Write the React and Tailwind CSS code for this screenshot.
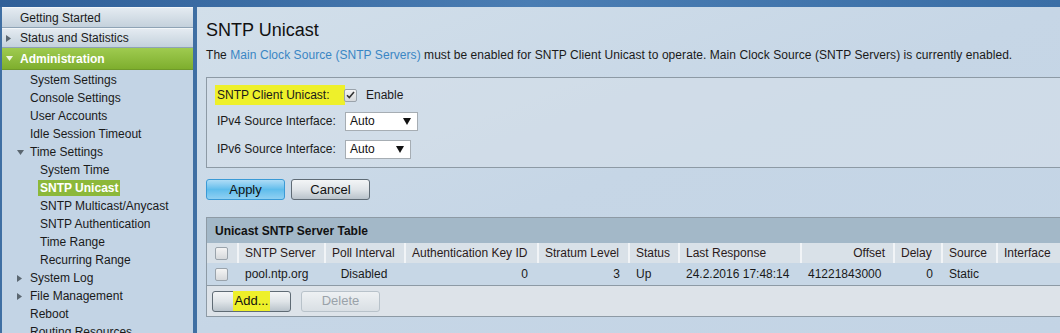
import React from "react";

const sideItems = [
  { label: "System Settings", level: 2 },
  { label: "Console Settings", level: 2 },
  { label: "User Accounts", level: 2 },
  { label: "Idle Session Timeout", level: 2 },
  { label: "Time Settings", level: 2, arrow: "down" },
  { label: "System Time", level: 3 },
  { label: "SNTP Unicast", level: 3, active: true },
  { label: "SNTP Multicast/Anycast", level: 3 },
  { label: "SNTP Authentication", level: 3 },
  { label: "Time Range", level: 3 },
  { label: "Recurring Range", level: 3 },
  { label: "System Log", level: 2, arrow: "right" },
  { label: "File Management", level: 2, arrow: "right" },
  { label: "Reboot", level: 2 },
  { label: "Routing Resources", level: 2 },
];

const headers = [
  { label: "SNTP Server" },
  { label: "Poll Interval" },
  { label: "Authentication Key ID" },
  { label: "Stratum Level" },
  { label: "Status" },
  { label: "Last Response" },
  { label: "Offset", right: true },
  { label: "Delay" },
  { label: "Source" },
  { label: "Interface" },
];

const gridCols =
  "grid grid-cols-[30px_87px_80px_133px_91px_50px_122px_93px_48px_55px_80px]";

function Arrow({ dir }) {
  return dir === "down" ? (
    <svg width="7" height="5" viewBox="0 0 7 5">
      <path d="M0 0h7L3.5 5z" fill="currentColor" />
    </svg>
  ) : (
    <svg width="5" height="7" viewBox="0 0 5 7">
      <path d="M0 0v7l5-3.5z" fill="currentColor" />
    </svg>
  );
}

function CheckBox({ checked }) {
  return (
    <span className="inline-flex items-center justify-center w-[13px] h-[13px] rounded-[2px] border border-[#9aa3ab] bg-gradient-to-b from-[#f4f4f4] to-[#d6d9dc]">
      {checked && (
        <svg width="9" height="8" viewBox="0 0 9 8">
          <path d="M1 4.2l2.3 2.3L8 1" fill="none" stroke="#333" strokeWidth="1.6" />
        </svg>
      )}
    </span>
  );
}

function Select({ width }) {
  return (
    <div
      className={`flex items-center justify-between h-[19px] ${width} bg-white border border-[#a6adb3] pl-[4px] pr-[6px] text-[12px] text-[#111]`}
    >
      <span>Auto</span>
      <svg width="8" height="7" viewBox="0 0 8 7">
        <path d="M0 0h8L4 7z" fill="#111" />
      </svg>
    </div>
  );
}

function Btn({ children, primary, disabled }) {
  const look = primary
    ? "border-[#3a9ad6] bg-gradient-to-b from-[#aedcf6] via-[#5fbdec] to-[#8fd0f2] text-[#111]"
    : disabled
    ? "border-[#b8c2ca] bg-gradient-to-b from-[#eef1f3] to-[#d9dfe4] text-[#9aa2a9]"
    : "border-[#5f6b75] bg-gradient-to-b from-[#f3f5f6] via-[#dfe4e8] to-[#b9c3cb] text-[#111]";
  return (
    <div
      className={`flex items-center justify-center w-[79px] h-[21px] rounded-[3px] border text-[13px] ${look}`}
    >
      {children}
    </div>
  );
}

export default function App() {
  return (
    <div className="w-[1060px] h-[333px] overflow-hidden bg-[#3f6fa3] font-['Liberation_Sans',Arial,sans-serif] text-[12px] text-[#1a1a1a] flex flex-col">
      <div className="h-[7px] shrink-0 bg-gradient-to-r from-[#2f5f98] via-[#4a7db3] to-[#3a6ea6]" />
      <div className="flex flex-1 min-h-0">
        {/* Sidebar */}
        <div className="w-[191px] ml-[2px] shrink-0 bg-[#c3d4e5] flex flex-col overflow-hidden">
          <div className="h-[21px] shrink-0 flex items-center pl-[18px] border-t border-[#f2f6f9] border-b border-b-[#8ea3b5] bg-gradient-to-b from-[#e4ebf1] to-[#c4d1dc]">
            Getting Started
          </div>
          <div className="h-[20px] shrink-0 flex items-center border-t border-[#f2f6f9] border-b border-b-[#8ea3b5] bg-gradient-to-b from-[#e4ebf1] to-[#c4d1dc]">
            <span className="w-[18px] pl-[4px] text-[#5a6670] flex items-center">
              <Arrow dir="right" />
            </span>
            Status and Statistics
          </div>
          <div className="h-[22px] shrink-0 flex items-center bg-gradient-to-b from-[#9fcb4f] to-[#7eae2d] border-b border-[#6f9a2a] text-white font-bold">
            <span className="w-[18px] pl-[4px] flex items-center text-[#eef6df]">
              <Arrow dir="down" />
            </span>
            Administration
          </div>
          <div className="pt-[1px] flex flex-col shrink-0">
            {sideItems.map((it) => (
              <div
                key={it.label}
                className={`h-[18px] shrink-0 flex items-center ${it.level === 3 ? "pl-[36px]" : "pl-[10px]"}`}
              >
                {it.level === 2 && (
                  <span className="w-[16px] pl-[5px] flex items-center text-[#5a6670]">
                    {it.arrow && <Arrow dir={it.arrow} />}
                  </span>
                )}
                <span
                  className={
                    it.active
                      ? "bg-[#8cb83a] text-white font-bold px-[2px] leading-[16px]"
                      : "px-[2px]"
                  }
                >
                  {it.label}
                </span>
              </div>
            ))}
          </div>
        </div>

        {/* Main */}
        <div className="ml-[4px] flex-1 min-w-0 overflow-hidden bg-gradient-to-br from-[#d2dfea] via-[#c6d6e6] to-[#c3d4e5] pl-[9px] flex flex-col">
          <h1 className="text-[18px] leading-[22px] text-[#111] mt-[12px]">SNTP Unicast</h1>
          <p className="mt-[6px] leading-[16px] tracking-[0.06px] whitespace-nowrap">
            The <span className="text-[#3a86c4]">Main Clock Source (SNTP Servers)</span> must be
            enabled for SNTP Client Unicast to operate. Main Clock Source (SNTP Servers) is
            currently enabled.
          </p>

          <div className="mt-[14px] mr-[-10px] h-[91px] shrink-0 border border-[#8d9aa5] bg-[#d6e0ea]/60 pl-[8px] pt-[7px] flex flex-col">
            <div className="h-[20px] flex items-center">
              <span className="bg-[#eef02a] px-[2px] h-[20px] flex items-center w-[130px]">
                SNTP Client Unicast:
              </span>
              <span className="ml-[-1px] flex items-center">
                <CheckBox checked />
              </span>
              <span className="ml-[9px]">Enable</span>
            </div>
            <div className="mt-[6px] h-[20px] flex items-center">
              <span className="w-[130px] pl-[2px]">IPv4 Source Interface:</span>
              <Select width="w-[73px]" />
            </div>
            <div className="mt-[8px] h-[20px] flex items-center">
              <span className="w-[130px] pl-[2px]">IPv6 Source Interface:</span>
              <Select width="w-[66px]" />
            </div>
          </div>

          <div className="mt-[11px] flex gap-[6px] shrink-0">
            <Btn primary>Apply</Btn>
            <Btn>Cancel</Btn>
          </div>

          <div className="mt-[17px] mr-[-10px] shrink-0 border border-[#8d9aa5] bg-[#dae2ea]">
            <div className="h-[25px] flex items-center pl-[8px] bg-[#a3b8c8] font-bold text-[#111]">
              Unicast SNTP Server Table
            </div>
            <div className={`${gridCols} h-[20px] bg-[#d9e1e8] text-[#2a1a1a] whitespace-nowrap`}>
              <div className="flex items-center pl-[8px]">
                <CheckBox />
              </div>
              {headers.map((h) => (
                <div
                  key={h.label}
                  className={`flex items-center border-l-2 border-[#f1f4f7] ${h.right ? "justify-end pr-[8px]" : "pl-[6px]"}`}
                >
                  {h.label}
                </div>
              ))}
            </div>
            <div className={`${gridCols} h-[23px] bg-[#c7d7e6] border-b border-[#8d9aa5] whitespace-nowrap`}>
              <div className="flex items-center pl-[8px]">
                <CheckBox />
              </div>
              <div className="flex items-center pl-[8px]">pool.ntp.org</div>
              <div className="flex items-center justify-center">Disabled</div>
              <div className="flex items-center justify-end pr-[9px]">0</div>
              <div className="flex items-center justify-end pr-[8px]">3</div>
              <div className="flex items-center pl-[8px]">Up</div>
              <div className="flex items-center pl-[8px]">24.2.2016 17:48:14</div>
              <div className="flex items-center pl-[8px]">41221843000</div>
              <div className="flex items-center justify-end pr-[8px]">0</div>
              <div className="flex items-center pl-[8px]">Static</div>
              <div />
            </div>
            <div className="h-[30px] flex items-center pl-[5px] gap-[10px] bg-[#dde3e9]">
              <Btn>
                <span className="bg-[#eef02a] px-[2px]">Add...</span>
              </Btn>
              <Btn disabled>Delete</Btn>
            </div>
          </div>
        </div>
      </div>
    </div>
  );
}
